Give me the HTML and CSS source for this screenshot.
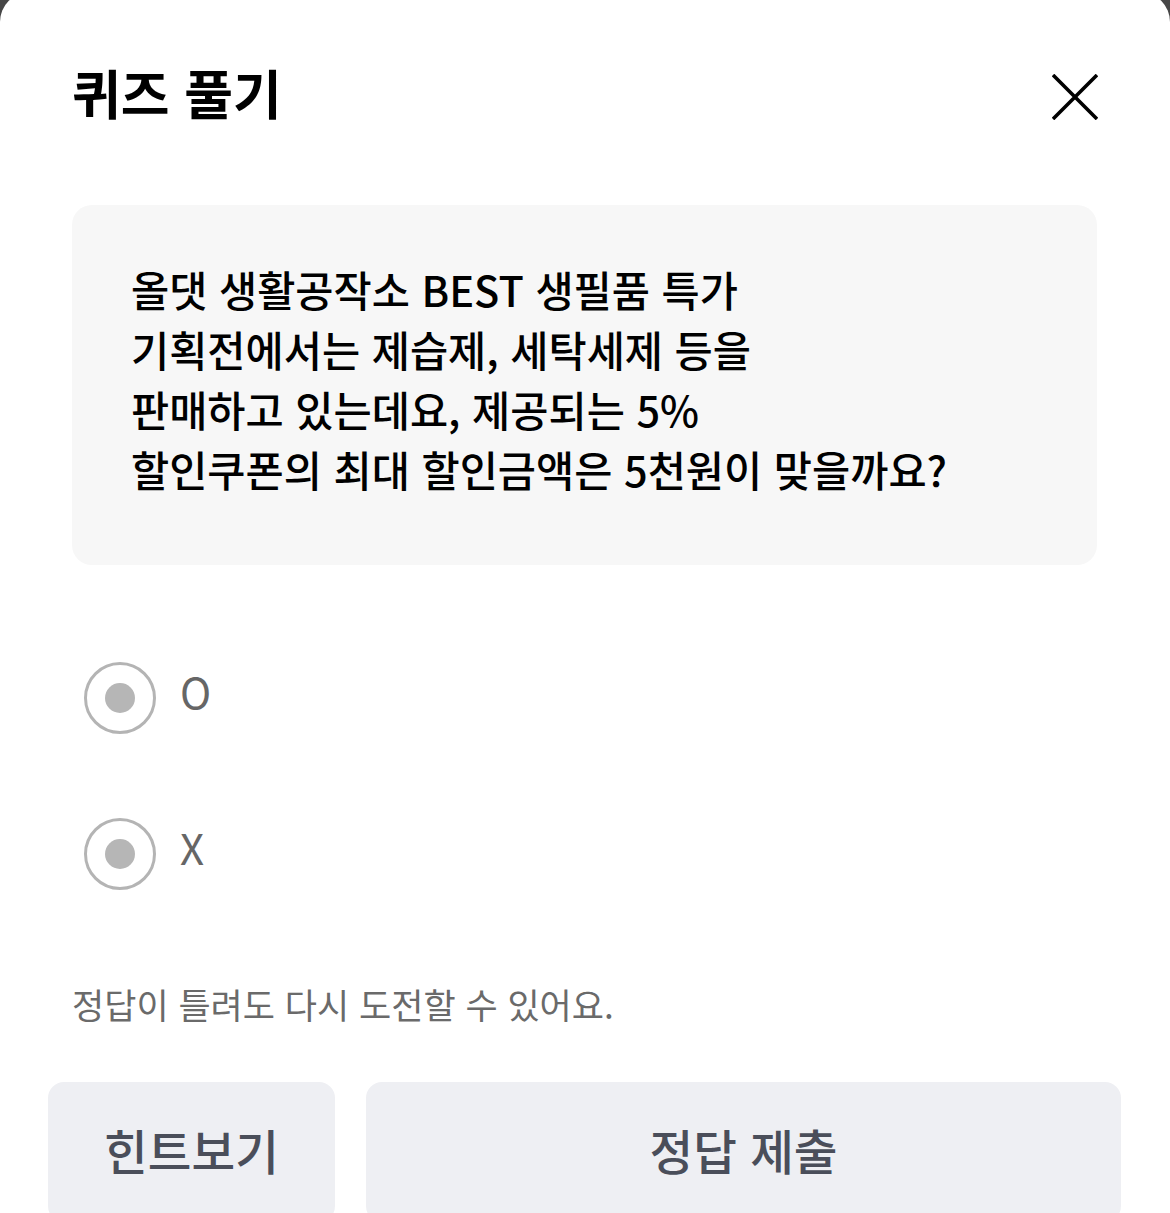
FILE: index.html
```html
<!DOCTYPE html>
<html lang="ko">
<head>
<meta charset="utf-8">
<title>퀴즈 풀기</title>
<link rel="stylesheet" href="styles.css">
</head>
<body>
<div class="modal">
  <div class="header">
    <h1 class="title">퀴즈 풀기</h1>
    <button class="close" aria-label="닫기">
      <svg width="46" height="46" viewBox="0 0 46 46"><path d="M1 1 L45 45 M45 1 L1 45" stroke="#000" stroke-width="3.6" fill="none"/></svg>
    </button>
  </div>
  <div class="question">
    <p>올댓 생활공작소 BEST 생필품 특가<br>기획전에서는 제습제, 세탁세제 등을<br>판매하고 있는데요, 제공되는 5%<br>할인쿠폰의 최대 할인금액은 5천원이 맞을까요?</p>
  </div>
  <div class="options">
    <label class="option"><span class="radio"><span class="dot"></span></span><span class="opt-label">O</span></label>
    <label class="option"><span class="radio"><span class="dot"></span></span><span class="opt-label">X</span></label>
  </div>
  <p class="hint">정답이 틀려도 다시 도전할 수 있어요.</p>
  <div class="actions">
    <button class="btn btn-hint">힌트보기</button>
    <button class="btn btn-submit">정답 제출</button>
  </div>
</div>
</body>
</html>
```
FILE: styles.css
```css
html, body {
  margin: 0;
  padding: 0;
  height: 100%;
  overflow: hidden;
}
body {
  background: #474747;
  font-family: "Noto Sans CJK KR", "Noto Sans", sans-serif;
  color: #000;
}
.modal {
  background: #fff;
  margin-top: -8px;
  padding-top: 8px;
  border-radius: 30px 30px 0 0;
  height: 1300px;
  box-sizing: border-box;
}
.header {
  height: 190px;
  display: flex;
  align-items: center;
  justify-content: space-between;
  padding: 0 72px 0 72px;
}
.title {
  margin: -6px 0 0 0;
  font-size: 53px;
  font-weight: 700;
  line-height: 1.4;
  letter-spacing: 0;
}
.close {
  border: 0;
  background: none;
  padding: 0;
  width: 46px;
  height: 46px;
  display: flex;
  margin-top: 4px;
}
.question {
  margin: 15px 73px 0 72px;
  background: #f7f7f7;
  border-radius: 20px;
  padding: 54px 30px 66px 59px;
}
.question p {
  margin: 0;
  font-size: 41.5px;
  font-weight: 500;
  line-height: 60px;
}
.options {
  margin-top: 97px;
  padding-left: 84px;
  display: flex;
  flex-direction: column;
  gap: 84px;
}
.option {
  display: flex;
  align-items: center;
  height: 72px;
}
.radio {
  width: 72px;
  height: 72px;
  box-sizing: border-box;
  border: 3px solid #b4b4b4;
  border-radius: 50%;
  display: flex;
  align-items: center;
  justify-content: center;
}
.dot {
  width: 30px;
  height: 30px;
  border-radius: 50%;
  background: #b6b6b6;
}
.opt-label {
  margin-left: 24px;
  font-size: 42px;
  font-weight: 400;
  color: #666;
  line-height: 1;
  margin-top: -15px;
}
.hint {
  margin: 89px 0 0 72px;
  font-size: 35px;
  line-height: 50px;
  color: #6a6a6a;
  font-weight: 400;
}
.actions {
  margin-top: 53px;
  padding: 0 49px 0 48px;
  display: flex;
  gap: 31px;
}
.btn {
  border: 0;
  height: 140px;
  border-radius: 16px;
  background: #eeeff3;
  color: #4a4e5a;
  font-family: "Noto Sans CJK KR", "Noto Sans", sans-serif;
  font-size: 47.5px;
  font-weight: 500;
  padding: 0 0 6px 0;
}
.btn-hint {
  width: 287px;
}
.btn-submit {
  flex: 1;
}
```
